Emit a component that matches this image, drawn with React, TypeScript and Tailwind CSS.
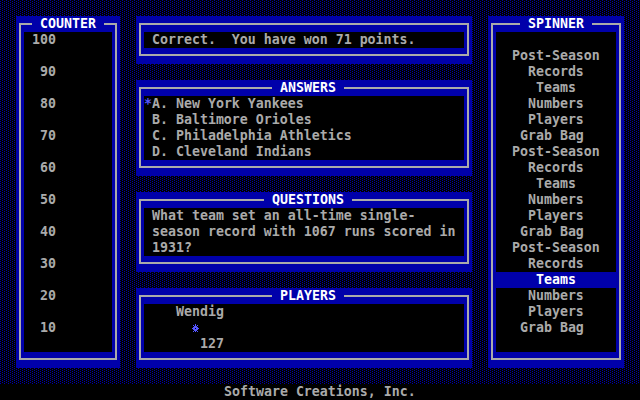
import React from "react";

type PanelProps = {
  title?: string;
  titleClass?: string;
  className?: string;
  children: React.ReactNode;
};

function Panel({ title, titleClass, className, children }: PanelProps) {
  return (
    <div className={`relative bg-[#0000aa] px-[3px] pt-[7px] pb-[8px] ${className ?? ""}`}>
      <div className="border-2 border-[#aaaaaa] px-[3px] pt-[7px] pb-[6px]">
        <div className="bg-black whitespace-pre">{children}</div>
      </div>
      {title ? (
        <div
          className={`absolute top-0 h-4 leading-4 bg-[#0000aa] text-white whitespace-pre ${titleClass ?? ""}`}
        >
          {` ${title} `}
        </div>
      ) : null}
    </div>
  );
}

const Line = ({ children, className }: { children?: React.ReactNode; className?: string }) => (
  <div className={`h-4 leading-4 whitespace-pre ${className ?? ""}`}>{children ?? " "}</div>
);

const Sun = () => (
  <svg width="8" height="16" viewBox="0 0 8 16" className="inline-block align-top" shapeRendering="crispEdges">
    <g fill="#5555ff">
      <rect x="3" y="4" width="1" height="8" />
      <rect x="0" y="8" width="7" height="1" />
      <rect x="2" y="6" width="3" height="5" />
      <rect x="1" y="7" width="5" height="3" />
      <rect x="1" y="5" width="1" height="1" />
      <rect x="5" y="5" width="1" height="1" />
      <rect x="1" y="11" width="1" height="1" />
      <rect x="5" y="11" width="1" height="1" />
    </g>
    <rect x="3" y="8" width="1" height="1" fill="#000" />
  </svg>
);

const Dither = () => (
  <svg className="absolute inset-0" width="640" height="384" shapeRendering="crispEdges">
    <defs>
      <pattern id="shade" width="4" height="2" patternUnits="userSpaceOnUse">
        <rect x="0" y="0" width="4" height="2" fill="#000000" />
        <rect x="2" y="0" width="1" height="1" fill="#0000aa" />
        <rect x="0" y="1" width="1" height="1" fill="#0000aa" />
      </pattern>
    </defs>
    <rect x="0" y="0" width="640" height="384" fill="url(#shade)" />
  </svg>
);

const counterRows: string[] = Array.from({ length: 20 }, (_, i) => {
  if (i % 2 !== 0) return "";
  const n = 100 - (i / 2) * 10;
  return n === 100 ? " 100" : `  ${n}`;
});

const spinnerItems = [
  "  Post-Season  ",
  "    Records    ",
  "     Teams     ",
  "    Numbers    ",
  "    Players    ",
  "   Grab Bag    ",
  "  Post-Season  ",
  "    Records    ",
  "     Teams     ",
  "    Numbers    ",
  "    Players    ",
  "   Grab Bag    ",
  "  Post-Season  ",
  "    Records    ",
  "     Teams     ",
  "    Numbers    ",
  "    Players    ",
  "   Grab Bag    ",
];

export default function App() {
  return (
    <div className="w-[640px] h-[400px] overflow-hidden bg-black font-['DejaVu_Sans_Mono',monospace] text-[13.288px] leading-4 font-bold text-[#aaaaaa]">
      <div className="relative h-[384px]">
        <Dither />
        <div className="relative flex gap-4 pl-4 pt-4">
          {/* COUNTER */}
          <Panel title="COUNTER" titleClass="left-[16px]" className="w-[104px] self-start">
            {counterRows.map((r, i) => (
              <Line key={i}>{r}</Line>
            ))}
          </Panel>

          {/* Middle column */}
          <div className="w-[336px] flex flex-col gap-4">
            <Panel>
              <Line> Correct.  You have won 71 points.</Line>
            </Panel>

            <Panel title="ANSWERS" titleClass="left-[136px]">
              <Line>
                <span className="text-[#5555ff]">*</span>A. New York Yankees
              </Line>
              <Line> B. Baltimore Orioles</Line>
              <Line> C. Philadelphia Athletics</Line>
              <Line> D. Cleveland Indians</Line>
            </Panel>

            <Panel title="QUESTIONS" titleClass="left-[128px]">
              <Line> What team set an all-time single-</Line>
              <Line> season record with 1067 runs scored in</Line>
              <Line> 1931?</Line>
            </Panel>

            <Panel title="PLAYERS" titleClass="left-[136px]">
              <Line>    Wendig</Line>
              <Line>
                {"      "}
                <Sun />
              </Line>
              <Line>       127</Line>
            </Panel>
          </div>

          {/* SPINNER */}
          <Panel title="SPINNER" titleClass="left-[32px]" className="w-[136px] self-start">
            <Line />
            {spinnerItems.map((s, i) => (
              <Line key={i} className={i === 14 ? "bg-[#0000aa] text-white" : ""}>
                {s}
              </Line>
            ))}
            <Line />
          </Panel>
        </div>
      </div>
      <div className="h-4 leading-4 pl-[224px] whitespace-pre">Software Creations, Inc.</div>
    </div>
  );
}
